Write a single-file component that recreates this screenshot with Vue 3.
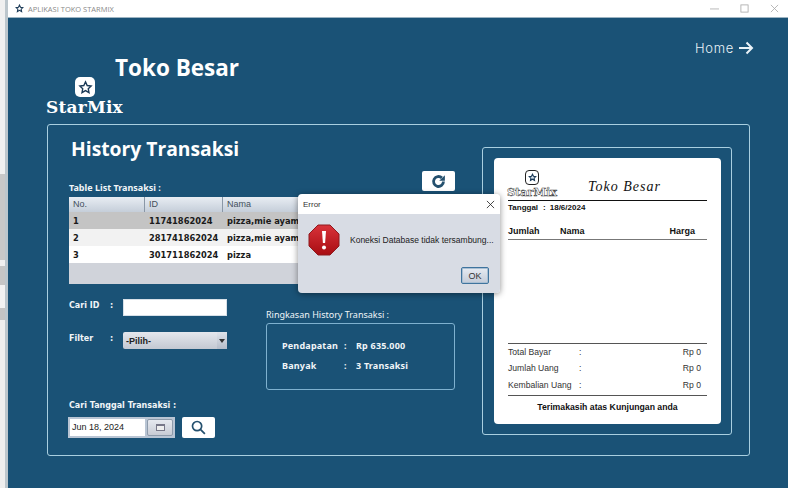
<template>
  <div class="screen">
    <div class="desk"></div>
    <div class="window">
      <div class="titlebar">
        <svg class="title-icon" viewBox="0 0 24 24"><path d="M12 3l2.700 5.800 6.300.8-4.600 4.300 1.200 6.300L12 17l-5.600 3.200 1.200-6.300L3 9.600l6.300-.8z" /></svg>
        <span class="title-text">APLIKASI TOKO STARMIX</span>
        <div class="win-buttons">
          <svg viewBox="0 0 10 10"><path d="M0 5.500h10" /></svg>
          <svg viewBox="0 0 10 10"><rect x="1" y="1" width="8" height="8" /></svg>
          <svg viewBox="0 0 10 10"><path d="M1 1l8 8M9 1l-8 8" /></svg>
        </div>
      </div>

      <div class="content">
        <header class="head">
          <div class="brand">
            <div class="brand-icon">
              <svg viewBox="0 0 24 24"><path d="M12 3l2.700 5.800 6.300.8-4.600 4.300 1.200 6.300L12 17l-5.600 3.200 1.200-6.300L3 9.600l6.300-.8z" /></svg>
            </div>
            <div class="brand-name">StarMix</div>
          </div>
          <h1 class="shop">Toko Besar</h1>
          <div class="home">
            <span>Home</span>
            <svg viewBox="0 0 16 14"><path d="M1 7h13M8.500 1.500L14 7l-5.500 5.500" /></svg>
          </div>
        </header>

        <section class="panel">
          <div class="left">
            <h2 class="page-title">History Transaksi</h2>
            <div class="table-bar">
              <span class="label table-label">Table List Transaksi :</span>
              <button class="white-btn">
                <svg viewBox="0 0 24 24" class="refresh"><path d="M19 12a7 7 0 1 1-2.200-5.100" /><path class="fill" d="M21 3v8h-8z" /></svg>
              </button>
            </div>

            <div class="table">
              <div class="tr th">
                <div v-for="h in headers" :key="h" class="cell">{{ h }}</div>
              </div>
              <div v-for="(row, i) in rows" :key="row.no" class="tr" :class="'row' + i">
                <div class="cell">{{ row.no }}</div>
                <div class="cell">{{ row.id }}</div>
                <div class="cell">{{ row.nama }}</div>
                <div class="cell"></div>
              </div>
            </div>

            <div class="lower">
              <div class="form">
                <div class="field">
                  <span class="label name">Cari ID</span><span class="label">:</span>
                  <div class="input"></div>
                </div>
                <div class="field second">
                  <span class="label name">Filter</span><span class="label">:</span>
                  <div class="select">
                    <span>-Pilih-</span>
                    <i class="caret"></i>
                  </div>
                </div>
                <div class="label date-label">Cari Tanggal Transaksi :</div>
                <div class="date-row">
                  <div class="date">
                    <div class="date-input">Jun 18, 2024</div>
                    <div class="date-btn"><i></i></div>
                  </div>
                  <button class="white-btn search">
                    <svg viewBox="0 0 24 24"><circle cx="10" cy="10" r="6.500" /><path d="M15 15l6 6" /></svg>
                  </button>
                </div>
              </div>

              <div class="summary">
                <div class="summary-title">Ringkasan History Transaksi :</div>
                <div class="summary-box">
                  <div class="sum-row"><span class="sum-name">Pendapatan</span><span class="sum-colon">:</span><span>Rp 635.000</span></div>
                  <div class="sum-row"><span class="sum-name">Banyak</span><span class="sum-colon">:</span><span>3 Transaksi</span></div>
                </div>
              </div>
            </div>
          </div>

          <div class="frame">
            <div class="paper">
              <div class="r-head">
                <div class="r-brand">
                  <div class="r-icon">
                    <svg viewBox="0 0 24 24"><path d="M12 5l2.200 4.500 4.800.6-3.500 3.300.9 4.800L12 15.800l-4.400 2.400.9-4.800L5 10.100l4.800-.6z" /></svg>
                  </div>
                  <div class="r-name">StarMix</div>
                </div>
                <div class="r-shop">Toko Besar</div>
              </div>
              <div class="r-date"><span>Tanggal</span><span class="r-date-colon">:</span><span>18/6/2024</span></div>
              <div class="r-cols">
                <span class="c-jumlah">Jumlah</span>
                <span class="c-nama">Nama</span>
                <span class="c-harga">Harga</span>
              </div>
              <div class="r-items"></div>
              <div class="r-totals">
                <div v-for="t in totals" :key="t" class="r-total">
                  <span class="t-name">{{ t }}</span>
                  <span>:</span>
                  <span class="t-val">Rp 0</span>
                </div>
              </div>
              <div class="r-foot">Terimakasih atas Kunjungan anda</div>
            </div>
          </div>
        </section>
      </div>
    </div>

    <div class="dialog">
      <div class="dlg-title">
        <span>Error</span>
        <svg viewBox="0 0 10 10"><path d="M1 1l8 8M9 1l-8 8" /></svg>
      </div>
      <div class="dlg-body">
        <div class="dlg-msg">
          <svg class="stop" viewBox="0 0 32 32">
            <defs>
              <linearGradient id="stopfill" x1="0" y1="0" x2="0" y2="1">
                <stop offset="0" stop-color="#d9333a" />
                <stop offset="1" stop-color="#a80d12" />
              </linearGradient>
            </defs>
            <path d="M10 1h12l9 9v12l-9 9H10l-9-9V10z" fill="url(#stopfill)" stroke="#8e1a1e" />
            <path d="M14 7h4l-.9 12h-2.200z" fill="#fff" />
            <circle cx="16" cy="23.500" r="2" fill="#fff" />
          </svg>
          <span>Koneksi Database tidak tersambung...</span>
        </div>
        <button class="ok">OK</button>
      </div>
    </div>
  </div>
</template>

<script setup>
const headers = ['No.', 'ID', 'Nama', '']

const rows = [
  { no: 1, id: '11741862024', nama: 'pizza,mie ayam' },
  { no: 2, id: '281741862024', nama: 'pizza,mie ayam' },
  { no: 3, id: '301711862024', nama: 'pizza' },
]

const totals = ['Total Bayar', 'Jumlah Uang', 'Kembalian Uang']
</script>

<style>
html,
body {
  margin: 0;
  overflow: hidden;
}
</style>

<style scoped>
.screen {
  position: relative;
  display: flex;
  width: 788px;
  height: 488px;
  overflow: hidden;
  font-family: "DejaVu Sans", sans-serif;
  background: #f0f0f0;
}

.desk {
  width: 5px;
  flex: none;
  background: linear-gradient(#f0f0f0 174px, #c8c8c8 174px, #c8c8c8 260px, #f0f0f0 260px, #f0f0f0 266px, #c6c6c6 266px, #c6c6c6 285px, #f2f2f2 285px, #f2f2f2 308px, #c4c4c4 308px, #c4c4c4 320px, #eeeeee 320px);
  border-right: 3px solid #bcc6cc;
}

.window {
  flex: 1;
  display: flex;
  flex-direction: column;
  min-width: 0;
}

.titlebar {
  height: 17px;
  flex: none;
  display: flex;
  align-items: center;
  background: #fff;
  border-bottom: 1px solid #9db4c2;
}

.title-icon {
  width: 9px;
  height: 9px;
  margin-left: 7px;
  fill: none;
  stroke: #1b3a57;
  stroke-width: 3;
}

.title-text {
  margin-left: 4px;
  font-family: "Open Sans", sans-serif;
  font-size: 7.500px;
  color: #8a8a8a;
}

.win-buttons {
  margin-left: auto;
  display: flex;
  gap: 21px;
  margin-right: 9px;
}

.win-buttons svg {
  width: 9px;
  height: 9px;
  fill: none;
  stroke: #a8a8a8;
  stroke-width: 0.900;
}

.content {
  flex: 1;
  background: #1a5276;
  padding-left: 38px;
}

.head {
  height: 106px;
  display: flex;
  color: #fff;
}

.brand {
  width: 69px;
  flex: none;
  margin-top: 59px;
  white-space: nowrap;
}

.brand-icon {
  width: 20px;
  height: 20px;
  margin-left: 29px;
  background: #fff;
  border-radius: 5px;
  display: flex;
  align-items: center;
  justify-content: center;
}

.brand-icon svg {
  width: 15px;
  height: 15px;
  fill: none;
  stroke: #1b3a57;
  stroke-width: 2.200;
}

.brand-name {
  font-family: "DejaVu Serif", serif;
  font-weight: 700;
  font-size: 17px;
  line-height: 21px;
  letter-spacing: 0.200px;
}

.shop {
  margin: 36px 0 0;
  font-family: "Open Sans", sans-serif;
  font-size: 22.500px;
  line-height: 28px;
  font-weight: 700;
}

.home {
  margin-left: auto;
  margin-right: 34px;
  margin-top: 22px;
  height: 16px;
  display: flex;
  align-items: center;
  gap: 4px;
  font-family: "Inter", sans-serif;
  font-weight: 300;
  font-size: 13px;
  letter-spacing: 0.700px;
  color: #eaf3f8;
}

.home svg {
  width: 16px;
  height: 14px;
  fill: none;
  stroke: #eaf3f8;
  stroke-width: 2;
}

.panel {
  width: 703px;
  height: 332px;
  margin-left: 1px;
  box-sizing: border-box;
  border: 1px solid #a9cfe0;
  border-radius: 3px;
  display: flex;
  padding: 10px 0 0 21px;
  gap: 27px;
}

.left {
  width: 386px;
  flex: none;
}

.page-title {
  margin: 0 0 0 2px;
  font-family: "Open Sans", sans-serif;
  font-size: 19.300px;
  line-height: 28px;
  font-weight: 700;
  color: #fff;
  white-space: nowrap;
}

.label {
  font-size: 8px;
  line-height: 13px;
  font-weight: 700;
  color: #f0f5f8;
}

.table-bar {
  margin-top: 8px;
  height: 20px;
  display: flex;
  align-items: flex-end;
  justify-content: space-between;
}

.table-label {
  margin-bottom: -3px;
  font-family: "Noto Sans", sans-serif;
  font-size: 9px;
}

.white-btn {
  width: 33px;
  height: 20px;
  padding: 0;
  border: none;
  border-radius: 2px;
  background: #fff;
  display: flex;
  align-items: center;
  justify-content: center;
}

.refresh {
  width: 17px;
  height: 17px;
  fill: none;
  stroke: #24506e;
  stroke-width: 4;
}

.refresh .fill {
  fill: #24506e;
  stroke: none;
}

.table {
  margin-top: 6px;
  height: 87px;
  background: #d0d3da;
  font-size: 8.300px;
  color: #1a1a1a;
}

.tr {
  display: grid;
  grid-template-columns: 76px 78px 88px 1fr;
  align-items: center;
  height: 17px;
  font-weight: 700;
}

.tr .cell {
  padding-left: 4px;
  white-space: nowrap;
}

.th {
  height: 15px;
  font-family: "Liberation Sans", sans-serif;
  font-size: 9px;
  font-weight: 400;
  color: #44505c;
  background: linear-gradient(#e8edf3, #c5ced9);
}

.th .cell {
  height: 15px;
  line-height: 15px;
  box-sizing: border-box;
  border-right: 1px solid #8a97a6;
}

.row0 {
  background: #c4c4c4;
}

.row1 {
  background: #f2f2f2;
}

.row2 {
  background: #fff;
}

.lower {
  display: flex;
}

.form {
  width: 197px;
  flex: none;
  padding-top: 15px;
}

.field {
  display: flex;
  height: 17px;
}

.field.second {
  margin-top: 16px;
}

.name {
  width: 41px;
}

.field .label:nth-child(2) {
  width: 13px;
}

.input {
  width: 104px;
  height: 17px;
  box-sizing: border-box;
  background: #fff;
  border: 1px solid #d7e0e8;
}

.select {
  width: 104px;
  height: 17px;
  box-sizing: border-box;
  padding-left: 3px;
  border-radius: 2px;
  background: linear-gradient(#e4e7ed, #c3c8d2);
  display: flex;
  align-items: center;
  font-family: "Liberation Sans", sans-serif;
  font-weight: 700;
  font-size: 9px;
  color: #222;
}

.caret {
  margin-left: auto;
  width: 10px;
  height: 17px;
  background: linear-gradient(#dfe3ea, #b5bcc9);
  position: relative;
}

.caret::after {
  content: "";
  position: absolute;
  left: 2px;
  top: 7px;
  border: 3px solid transparent;
  border-top: 4px solid #333;
  border-bottom: none;
}

.date-label {
  margin-top: 50px;
  white-space: nowrap;
}

.date-row {
  margin-top: 5px;
  display: flex;
  gap: 7px;
}

.date {
  width: 107px;
  height: 21px;
  margin-left: -1px;
  box-sizing: border-box;
  padding: 2px;
  background: #b9c5d4;
  display: flex;
  gap: 2px;
}

.date-input {
  width: 75px;
  background: #fff;
  box-sizing: border-box;
  padding-left: 2px;
  font-family: "Liberation Sans", sans-serif;
  font-size: 9px;
  line-height: 17px;
  color: #222;
}

.date-btn {
  flex: 1;
  border: 1px solid #8e9bab;
  border-radius: 2px;
  background: linear-gradient(#e6e9ef, #c8ccd5);
  display: flex;
  align-items: center;
  justify-content: center;
}

.date-btn i {
  width: 7px;
  height: 4px;
  border: 1px solid #778;
  border-top-width: 2px;
  background: #eee;
}

.search {
  height: 21px;
}

.search svg {
  width: 17px;
  height: 17px;
  fill: none;
  stroke: #24506e;
  stroke-width: 2.400;
}

.summary {
  width: 189px;
  padding-top: 25px;
}

.summary-title {
  font-family: "Noto Sans", sans-serif;
  font-size: 9px;
  line-height: 12px;
  color: #f0f5f8;
  white-space: nowrap;
}

.summary-box {
  margin-top: 2px;
  height: 67px;
  box-sizing: border-box;
  border: 1px solid #7fb1cf;
  border-radius: 3px;
  padding: 15px 0 0 15px;
  font-family: "Noto Sans", sans-serif;
  font-size: 9px;
  font-weight: 700;
  letter-spacing: 0.200px;
  color: #f0f5f8;
}

.sum-row {
  display: flex;
  height: 20px;
  line-height: 13px;
}

.sum-name {
  width: 62px;
}

.sum-colon {
  width: 12px;
}

.frame {
  width: 250px;
  height: 288px;
  margin-top: 12px;
  box-sizing: border-box;
  border: 1px solid #a9cfe0;
  border-radius: 3px;
  padding: 10px 0 0 11px;
}

.paper {
  width: 227px;
  height: 266px;
  box-sizing: border-box;
  padding: 12px 14px 6px;
  background: #fff;
  border-radius: 4px;
  display: flex;
  flex-direction: column;
  color: #111;
  font-family: "Liberation Sans", sans-serif;
  font-size: 8.600px;
}

.r-head {
  height: 30px;
  flex: none;
  border-bottom: 1.500px solid #111;
  display: flex;
}

.r-brand {
  width: 52px;
  margin-left: -2px;
  text-align: center;
}

.r-icon {
  width: 14px;
  height: 15px;
  margin: 0 auto;
  border: 1px solid #222;
  border-radius: 4px;
  display: flex;
  align-items: center;
  justify-content: center;
  box-sizing: border-box;
}

.r-icon svg {
  width: 11px;
  height: 11px;
  fill: #d7e2ec;
  stroke: #1b3a57;
  stroke-width: 2.400;
}

.r-name {
  font-family: "DejaVu Serif", serif;
  font-weight: 700;
  font-size: 11.300px;
  line-height: 14px;
  color: #fff;
  -webkit-text-stroke: 0.500px #333;
  white-space: nowrap;
}

.r-shop {
  margin: 9px 0 0 30px;
  font-family: "Liberation Serif", serif;
  font-style: italic;
  font-size: 14px;
  line-height: 16px;
  letter-spacing: 1px;
  white-space: nowrap;
}

.r-date {
  margin-top: 1px;
  display: flex;
  font-weight: 700;
  font-size: 8px;
  line-height: 12px;
}

.r-date-colon {
  margin: 0 4px 0 5px;
}

.r-cols {
  margin-top: 11px;
  padding-bottom: 2px;
  height: 12px;
  line-height: 12px;
  border-bottom: 1px solid #777;
  display: flex;
  font-weight: 700;
  font-size: 9px;
}

.c-jumlah {
  width: 52px;
}

.c-harga {
  margin-left: auto;
  margin-right: 12px;
}

.r-items {
  flex: 1;
}

.r-totals {
  flex: none;
  border-top: 1px solid #555;
  border-bottom: 1px solid #555;
  padding-bottom: 2px;
}

.r-total {
  display: flex;
  height: 16.500px;
  align-items: center;
  color: #333;
}

.t-name {
  width: 71px;
}

.t-val {
  margin-left: auto;
  margin-right: 6px;
}

.r-foot {
  flex: none;
  height: 22px;
  line-height: 23px;
  text-align: center;
  font-weight: 700;
  font-size: 8.700px;
}

.dialog {
  position: absolute;
  left: 298px;
  top: 194px;
  width: 202px;
  height: 99px;
  border-radius: 4px;
  overflow: hidden;
  box-shadow: 0 1px 6px rgba(0, 0, 0, 0.45);
  display: flex;
  flex-direction: column;
}

.dlg-title {
  height: 20px;
  flex: none;
  background: #fff;
  display: flex;
  align-items: center;
  justify-content: space-between;
  padding: 0 5px;
  font-family: "Liberation Sans", sans-serif;
  font-size: 8px;
  color: #333;
}

.dlg-title svg {
  width: 9px;
  height: 9px;
  fill: none;
  stroke: #222;
  stroke-width: 0.900;
}

.dlg-body {
  flex: 1;
  background: #d8dce4;
  padding: 10px 11px 0 10px;
  display: flex;
  flex-direction: column;
  font-family: "Liberation Sans", sans-serif;
  font-size: 8.500px;
  color: #222;
}

.dlg-msg {
  display: flex;
  align-items: center;
  gap: 10px;
  white-space: nowrap;
}

.stop {
  width: 32px;
  height: 32px;
  flex: none;
}

.ok {
  align-self: flex-end;
  margin-top: 11px;
  width: 28px;
  height: 17px;
  padding: 0;
  border: 1px solid #3f749e;
  border-radius: 2px;
  box-shadow: inset 0 0 0 1px #a9bfd3;
  background: linear-gradient(#e6ebf2, #c3cbd8);
  font-family: "Liberation Sans", sans-serif;
  font-size: 9px;
  color: #333;
}
</style>
